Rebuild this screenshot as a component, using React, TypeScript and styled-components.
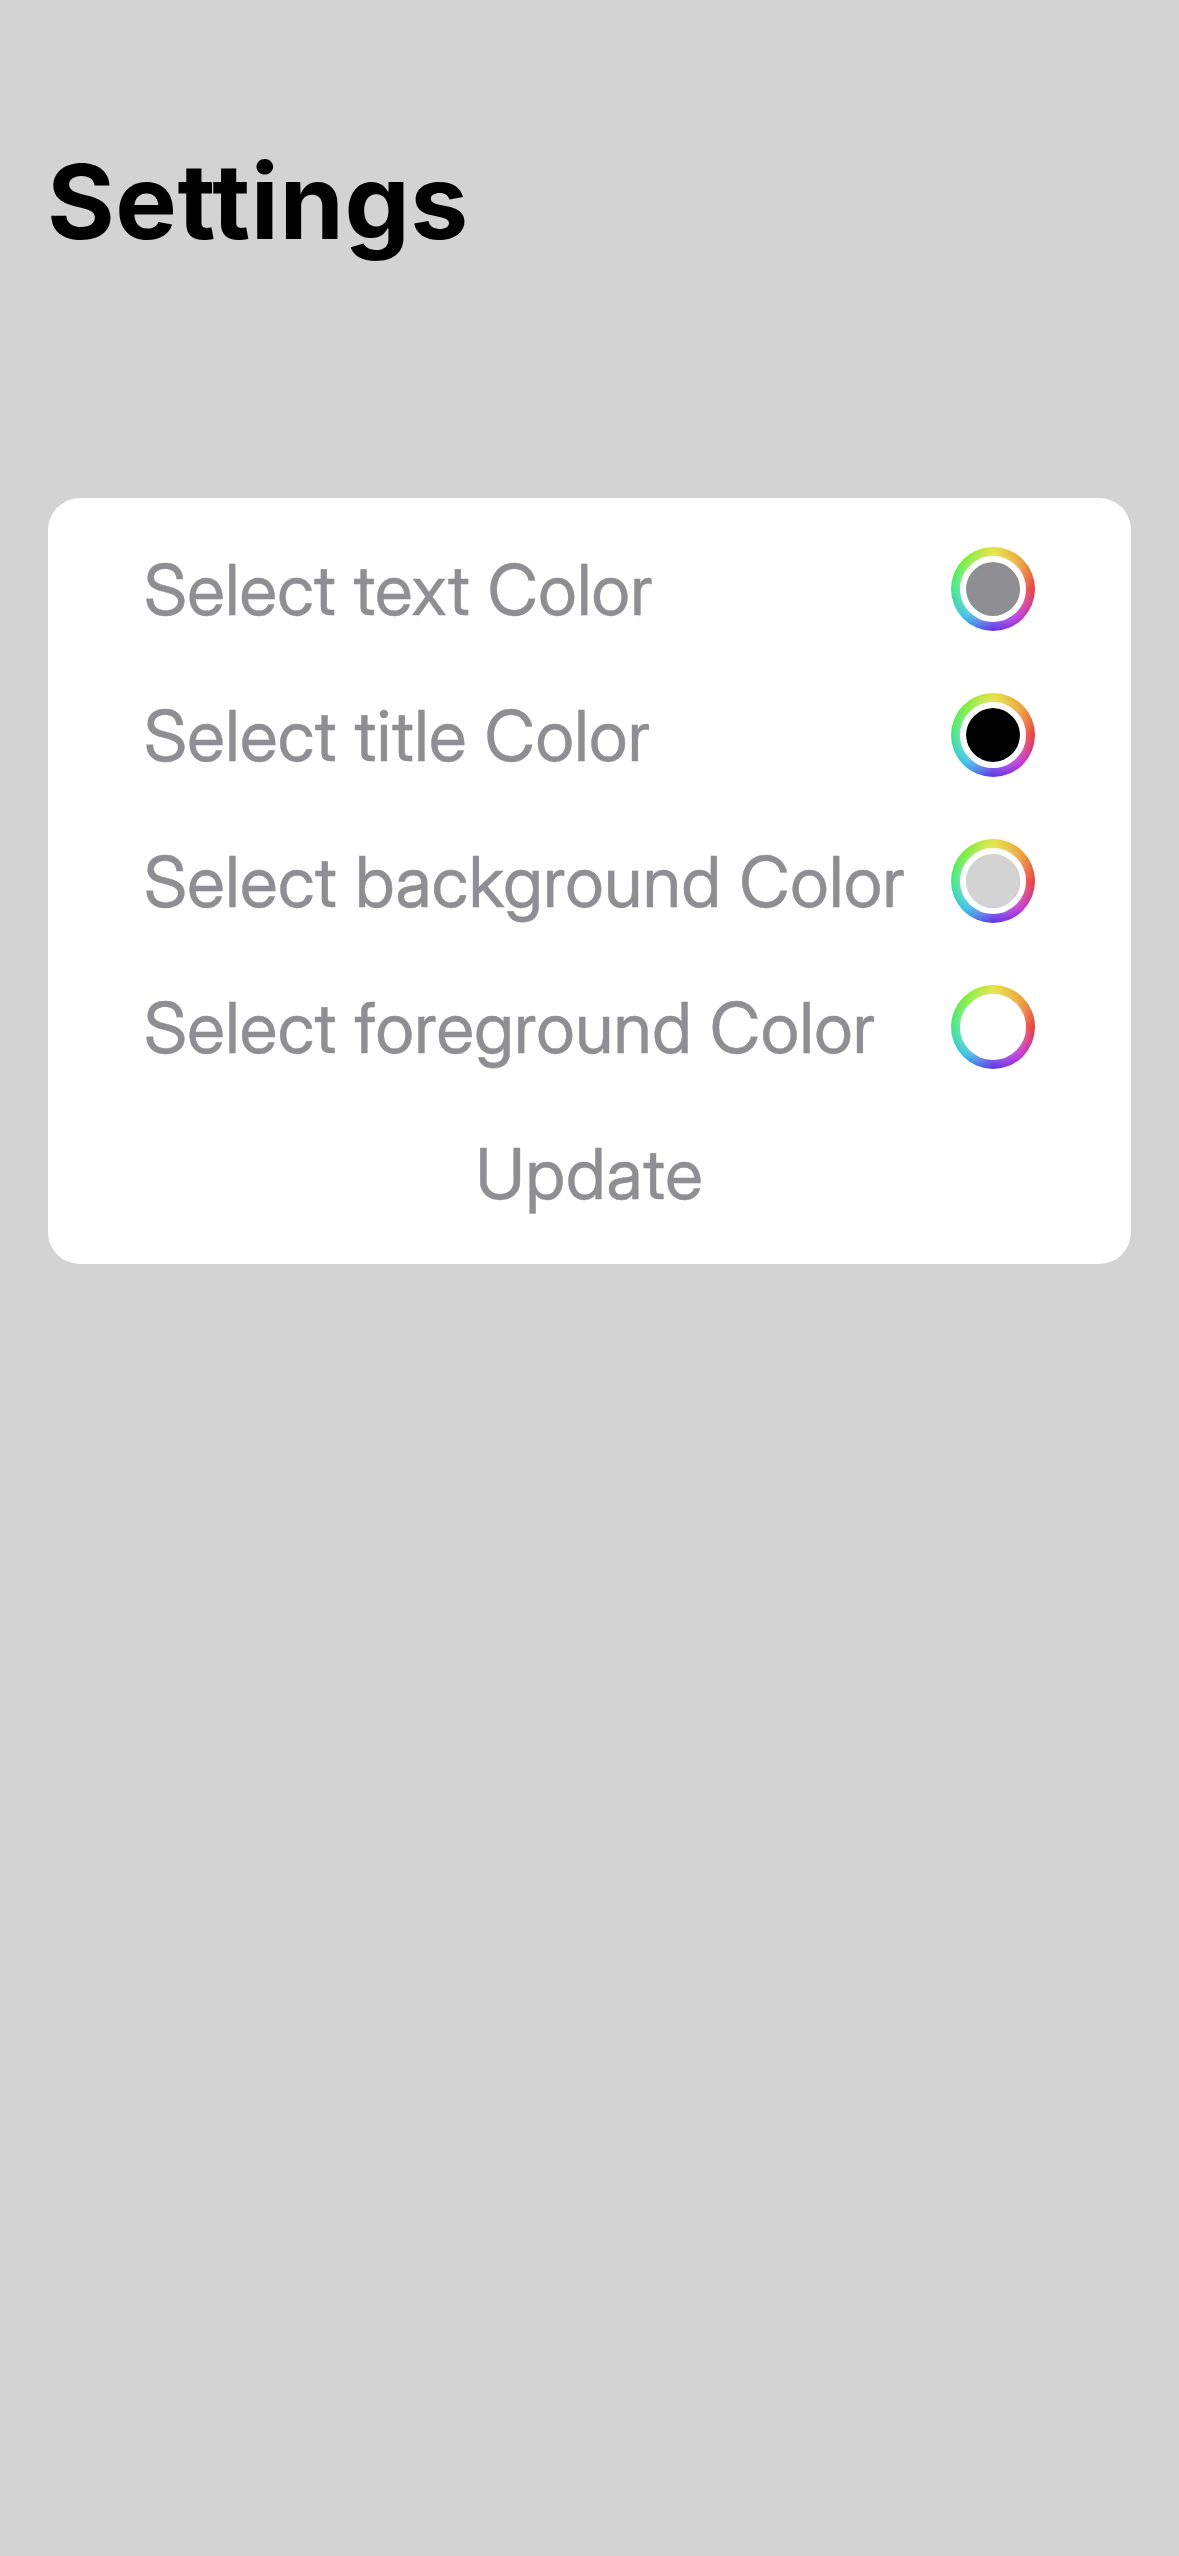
import React from "react";
import styled, { createGlobalStyle } from "styled-components";

const GlobalStyle = createGlobalStyle`
  * { box-sizing: border-box; }
  body {
    margin: 0;
    background: #d3d3d3;
    font-family: "Inter Display", Inter, "Liberation Sans", sans-serif;
  }
`;

const Screen = styled.main`
  min-height: 2556px;
  padding: 137px 48px 0;
  background: #d3d3d3;
`;

const Title = styled.h1`
  margin: 0 0 231px -1px;
  font-family: Inter, "Liberation Sans", sans-serif;
  font-size: 103.5px;
  line-height: 130px;
  font-weight: 700;
  letter-spacing: 0.55px;
  color: #000;
`;

const Card = styled.section`
  padding: 18px 96px;
  border-radius: 32px;
  background: #fff;
`;

const Row = styled.div<{ $centered?: boolean }>`
  display: flex;
  align-items: center;
  justify-content: ${(p) => (p.$centered ? "center" : "space-between")};
  height: 146px;
`;

const Label = styled.span<{ $tracking: number }>`
  padding-top: 2px;
  font-size: 70px;
  line-height: 86px;
  letter-spacing: ${(p) => p.$tracking}px;
  white-space: nowrap;
  color: #8e8e93;
  -webkit-text-stroke: 0.4px #8e8e93;
`;

const UpdateButton = styled.button`
  padding: 2px 0 0;
  border: 0;
  background: none;
  font-family: inherit;
  font-size: 70px;
  line-height: 86px;
  letter-spacing: 0.8px;
  color: #8e8e93;
  -webkit-text-stroke: 0.4px #8e8e93;
`;

const ColorWell = styled.button`
  display: grid;
  place-items: center;
  flex: none;
  width: 84px;
  height: 84px;
  padding: 0;
  border: 0;
  border-radius: 50%;
  background:
    radial-gradient(circle closest-side, rgba(255, 255, 255, 0.2) 78%, rgba(255, 255, 255, 0) 100%),
    conic-gradient(
      #e3e13c 0deg,
      #e9a233 45deg,
      #e83a38 90deg,
      #c032d4 135deg,
      #5b32e6 180deg,
      #37bfe6 225deg,
      #3fe688 270deg,
      #78ec38 315deg,
      #e3e13c 360deg
    );
`;

const Swatch = styled.span<{ $color: string }>`
  width: 66px;
  height: 66px;
  border: 6px solid #fff;
  border-radius: 50%;
  background: ${(p) => p.$color};
  background-clip: ${(p) => (p.$color === "#fff" ? "border-box" : "padding-box")};
`;

const settings = [
  { label: "Select text Color", color: "#8e8e93", tracking: 0.2 },
  { label: "Select title Color", color: "#000", tracking: 0.32 },
  { label: "Select background Color", color: "#d3d3d3", tracking: 0.37 },
  { label: "Select foreground Color", color: "#fff", tracking: 0.3 },
];

export default function App() {
  return (
    <Screen>
      <GlobalStyle />
      <Title>Settings</Title>
      <Card>
        {settings.map(({ label, color, tracking }) => (
          <Row key={label}>
            <Label $tracking={tracking}>{label}</Label>
            <ColorWell type="button" aria-label={label}>
              <Swatch $color={color} />
            </ColorWell>
          </Row>
        ))}
        <Row $centered>
          <UpdateButton type="button">Update</UpdateButton>
        </Row>
      </Card>
    </Screen>
  );
}
